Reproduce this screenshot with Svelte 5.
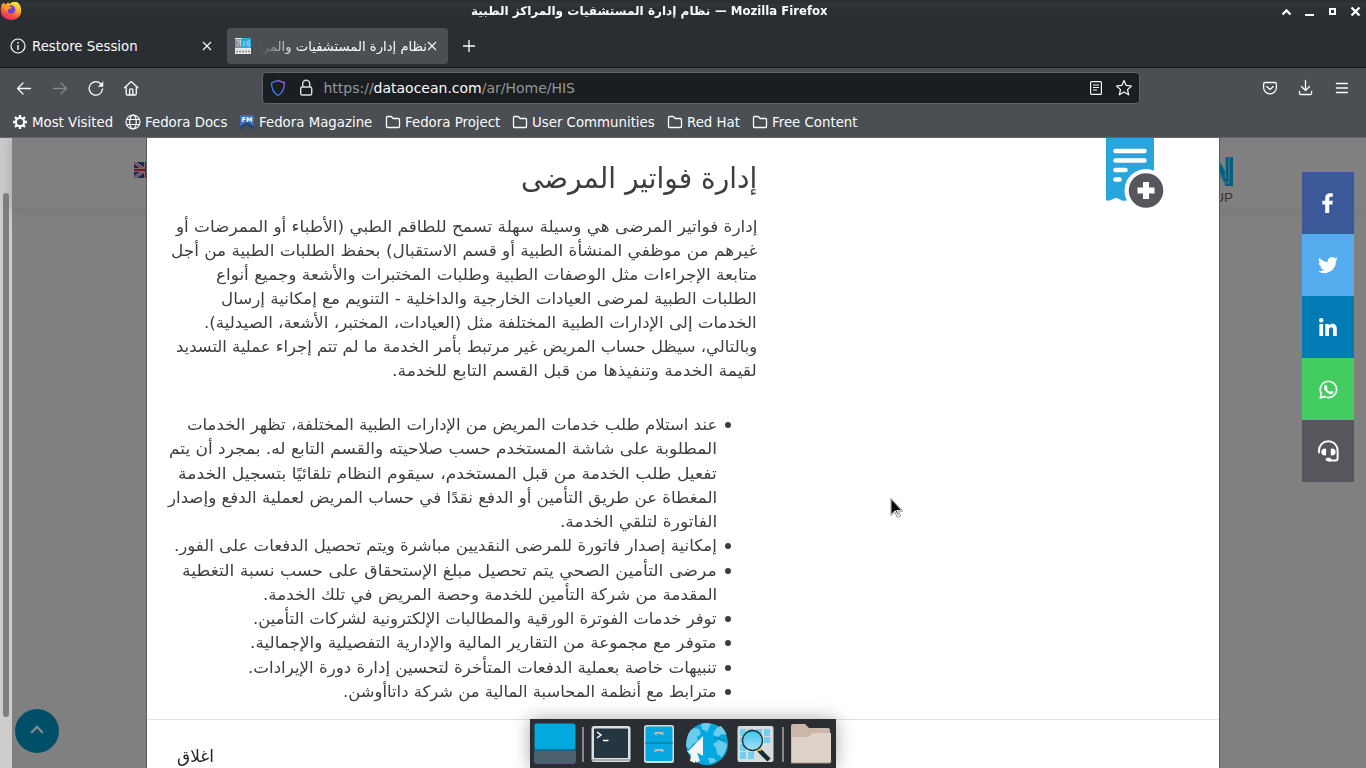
<script>
  const paragraph = [
    ['إدارة فواتير المرضى هي وسيلة سهلة تسمح للطاقم الطبي (الأطباء أو الممرضات أو', 581],
    ['غيرهم من موظفي المنشأة الطبية أو قسم الاستقبال) بحفظ الطلبات الطبية من أجل', 586],
    ['متابعة الإجراءات مثل الوصفات الطبية وطلبات المختبرات والأشعة وجميع أنواع', 541],
    ['الطلبات الطبية لمرضى العيادات الخارجية والداخلية - التنويم مع إمكانية إرسال', 536],
    ['الخدمات إلى الإدارات الطبية المختلفة مثل (العيادات، المختبر، الأشعة، الصيدلية).', 553],
    ['وبالتالي، سيظل حساب المريض غير مرتبط بأمر الخدمة ما لم تتم إجراء عملية التسديد', 581],
    ['لقيمة الخدمة وتنفيذها من قبل القسم التابع للخدمة.', 365]
  ];
  const items = [
    [
      ['عند استلام طلب خدمات المريض من الإدارات الطبية المختلفة، تظهر الخدمات', 530],
      ['المطلوبة على شاشة المستخدم حسب صلاحيته والقسم التابع له. بمجرد أن يتم', 548],
      ['تفعيل طلب الخدمة من قبل المستخدم، سيقوم النظام تلقائيًا بتسجيل الخدمة', 539],
      ['المغطاة عن طريق التأمين أو الدفع نقدًا في حساب المريض لعملية الدفع وإصدار', 549],
      ['الفاتورة لتلقي الخدمة.', 157]
    ],
    [['إمكانية إصدار فاتورة للمرضى النقديين مباشرة ويتم تحصيل الدفعات على الفور.', 543]],
    [
      ['مرضى التأمين الصحي يتم تحصيل مبلغ الإستحقاق على حسب نسبة التغطية', 535],
      ['المقدمة من شركة التأمين للخدمة وحصة المريض في تلك الخدمة.', 454]
    ],
    [['توفر خدمات الفوترة الورقية والمطالبات الإلكترونية لشركات التأمين.', 464]],
    [['متوفر مع مجموعة من التقارير المالية والإدارية التفصيلية والإجمالية.', 467]],
    [['تنبيهات خاصة بعملية الدفعات المتأخرة لتحسين إدارة دورة الإيرادات.', 469]],
    [['مترابط مع أنظمة المحاسبة المالية من شركة داتاأوشن.', 374]]
  ];
  const folders = [['Fedora Project', 127], ['User Communities', 155], ['Red Hat', 85], ['Free Content', 110]];

  // Narrows or widens a line of text to the given measure.
  function fit(node, width) {
    node.style.transform = `scaleX(${width / node.offsetWidth})`;
  }
</script>

<div class="screen">
  <header class="titlebar">
    <svg class="fox" width="22" height="22" viewBox="0 0 22 22">
      <defs>
        <linearGradient id="fire" x1=".8" y1="0" x2=".25" y2="1"><stop offset="0" stop-color="#fff14a" /><stop offset=".35" stop-color="#ffb02e" /><stop offset=".65" stop-color="#ff5a36" /><stop offset="1" stop-color="#e9187a" /></linearGradient>
      </defs>
      <path d="M2 5.500 3.500 3.500l2 2.500 2.500-2.500 2 1.500 2-2h5c3 2 4.300 5 4.200 8.500 0 5.500-4 9.500-10 9.500S.8 17 .8 11.500C.8 9 1 7 2 5.500z" fill="url(#fire)" />
      <circle cx="11" cy="10.500" r="4.300" fill="#7143d0" />
      <path d="M3 6c3-1.500 5-.5 7 1.500 2 0 2 1 1 2-3 0-4 1.500-3 3.500-3-1-5-4-5-7z" fill="#ff9a27" />
    </svg>
    <div class="wintitle"><span class="t1" dir="rtl" use:fit={239}>نظام إدارة المستشفيات والمراكز الطبية</span><span class="t2" use:fit={113}>— Mozilla Firefox</span></div>
    <svg class="winbtns" width="84" height="20" viewBox="0 0 84 20" fill="none" stroke="#fff">
      <path d="M4.500 12.500 8.500 8.500l4 4" stroke-width="2.300" /><path d="M27 13h9" stroke-width="2" /><rect x="52" y="7" width="5" height="5" stroke-width="2" /><path d="m73.500 5.500 8 8m0-8-8 8" stroke-width="2.300" />
    </svg>
  </header>

  <nav class="tabs">
    <div class="tab">
      <svg class="info" width="16" height="16" viewBox="0 0 16 16" fill="none" stroke="#fbfbfe" stroke-width="1.200"><circle cx="8" cy="8" r="7" /><path d="M8 7v5M8 4v1.500" stroke-width="1.400" /></svg>
      <span class="tabname">Restore Session</span>
      <svg class="x" width="10" height="10" viewBox="0 0 10 10" stroke="#fbfbfe" stroke-width="1.100"><path d="m1 1 8 8m0-8-8 8" /></svg>
    </div>
    <div class="tab active">
      <svg width="16" height="16" viewBox="0 0 16 16"><path fill="#e6e8e9" d="M0 0h16v16H0z" /><path fill="#8b9094" d="M0 1h7v9H0z" /><path fill="#28aee5" d="M7 0h9v10H7z" /><path d="M1.500 3 4 2v3L2 8M5.500 2v6M9 3v5M11.500 3q2 2 0 5M14 2v7" fill="none" stroke="#cde" stroke-width=".8" /><path d="M1 13.500h14" stroke="#999" stroke-width="2" stroke-dasharray="2 1" /></svg>
      <span class="artab" dir="rtl"><span use:fit={168}>نظام إدارة المستشفيات والمرا</span></span>
      <svg class="x" width="10" height="10" viewBox="0 0 10 10" stroke="#fbfbfe" stroke-width="1.100"><path d="m1 1 8 8m0-8-8 8" /></svg>
    </div>
    <svg class="plus" width="14" height="14" viewBox="0 0 14 14" stroke="#fbfbfe" stroke-width="1.300"><path d="M7 1v12M1 7h12" /></svg>
  </nav>

  <section class="toolbar">
    <svg class="navicons" width="140" height="20" viewBox="0 0 140 20" fill="none" stroke="#fbfbfe" stroke-width="1.300" stroke-linecap="round" stroke-linejoin="round">
      <path d="M17.500 10.500H4.500m5.500-5.500-5.500 5.500L10 16" /><g stroke="#85878a"><path d="M40.500 10.500h13m-5.500-5.500 5.500 5.500L48 16" /></g>
      <path d="M89.500 11a6.700 6.700 0 1 1-2.100-5.500l2 2" /><path d="M90 4v4.500h-4.500z" fill="#fbfbfe" stroke-width=".5" />
      <path d="m111.500 9.800 6.700-6.200 6.700 6.200M113.200 8.500v7.300c0 .8.300 1.200 1.200 1.200h7.700c.8 0 1.200-.4 1.200-1.200V8.500m-6.700 8v-4.500c0-.8.400-1.200 1-1.200h1.300c.7 0 1 .4 1 1.200v4.500" />
    </svg>
    <div class="url">
      <svg width="44" height="18" viewBox="0 0 44 18" fill="none">
        <defs><linearGradient id="sh" x1="1" y1="0" x2="0" y2="1"><stop stop-color="#a05cf0" /><stop offset=".6" stop-color="#3c68e8" /><stop offset="1" stop-color="#2a9dee" /></linearGradient></defs>
        <path d="m8 1.500 6.500 2.300C14.500 10 12.500 14 8 16.500 3.500 14 1.500 10 1.500 3.800z" stroke="url(#sh)" stroke-width="1.400" />
        <rect x="30.700" y="8" width="11" height="8" rx="1.500" stroke="#ddd" stroke-width="1.400" />
        <path d="M32.700 8V4.800a3.500 3.500 0 0 1 7 0V8" stroke="#ddd" stroke-width="1.400" />
      </svg>
      <span class="addr">https://<b>dataocean.com</b>/ar/Home/HIS</span>
      <svg class="urlend" width="44" height="18" viewBox="0 0 44 18" fill="none" stroke="#fbfbfe" stroke-width="1.200" stroke-linejoin="round">
        <rect x="1.600" y="2.600" width="10.800" height="12.800" rx="1" /><path d="M4 6h6M4 8.500h6M4 11h4" />
        <path d="m35 1.500 2.200 4.900 5.300.6-4 3.600 1.200 5.200-4.700-2.700-4.700 2.700 1.200-5.200-4-3.600 5.300-.6z" />
      </svg>
    </div>
    <svg class="right" width="92" height="20" viewBox="0 0 92 20" fill="none" stroke="#fbfbfe" stroke-width="1.300" stroke-linecap="round" stroke-linejoin="round">
      <path d="M3 4.500h10c1 0 1.400.5 1.400 1.400v3.600a6.400 6.400 0 0 1-12.800 0V5.900C1.600 5 2 4.500 3 4.500zm1.700 4L8 11.500l3.300-3" /><path d="M43.500 2.500V12m-4-3.500 4 4 4-4M37.500 13.500v1.700c0 .9.400 1.300 1.300 1.300h9.500c.8 0 1.300-.4 1.300-1.300v-1.700" /><path d="M74.500 5.500h11M74.500 10h11M74.500 14.500h11" />
    </svg>
  </section>

  <section class="bookmarks">
    <div class="bm" style:width="113px"><svg width="16" height="16" viewBox="0 0 16 16" fill="none" stroke="#fbfbfe"><circle cx="8" cy="8" r="4.200" stroke-width="2.200" /><path d="M8 1v2.500M8 12.500V15M1 8h2.500M12.500 8H15M3 3l2 2M11 11l2 2M13 3l-2 2M5 11l-2 2" stroke-width="2.300" /></svg><span>Most Visited</span></div>
    <div class="bm" style:width="114px"><svg width="16" height="16" viewBox="0 0 16 16" fill="none" stroke="#fbfbfe" stroke-width="1.200"><circle cx="8" cy="8" r="7" /><ellipse cx="8" cy="8" rx="3.300" ry="7" /><path d="M1.500 5.500h13M1.500 10.500h13" /></svg><span>Fedora Docs</span></div>
    <div class="bm" style:width="146px"><svg width="16" height="16" viewBox="0 0 16 16"><path fill="#3c6eb4" d="M1 1h14v14l-7-5-7 5z" /><path fill="#294172" d="M1 12.500 8 8l7 4.500V16l-7-5-7 5z" /><text x="8" y="7.500" text-anchor="middle" fill="#fff" font-size="6.500" font-weight="bold" font-family="DejaVu Sans">FM</text></svg><span>Fedora Magazine</span></div>
    {#each folders as [name, width]}
      <div class="bm" style:width={`${width}px`}><svg width="16" height="16" viewBox="0 0 16 16" fill="none" stroke="#fbfbfe" stroke-width="1.300" stroke-linejoin="round"><path d="M1.500 12.500v-9c0-.6.400-1 1-1h3.700l2 2h5.300c.6 0 1 .4 1 1v7c0 .7-.4 1-1 1h-11c-.6 0-1-.4-1-1z" /></svg><span>{name}</span></div>
    {/each}
  </section>

  <main>
    <div class="scroll"><div class="thumb"></div></div>
    <div class="page">
      <div class="sitebar">
        <svg class="flag" width="22" height="16" viewBox="0 0 22 16"><path fill="#1b2659" d="M0 0h22v16H0z" /><path d="m0 0 22 16M22 0 0 16" stroke="#858087" stroke-width="3" /><path d="m0 0 22 16M22 0 0 16" stroke="#7d1f2d" stroke-width="1" /><path d="M12 0v16M0 8h22" stroke="#8a8285" stroke-width="4" /><path d="M12 0v16M0 8h22" stroke="#741824" stroke-width="2.400" /></svg>
        <div class="brand">
          <svg width="26" height="29" viewBox="0 0 26 29" fill="none" stroke="#006080"><path d="M6 0 21 26" stroke-width="7" /><path d="M22 0v29" stroke-width="8" /><path d="M18.300 0v22M22 0v26h-4L7 5" stroke="#688088" stroke-width=".9" /></svg>
          <span>GROUP</span>
        </div>
      </div>
      <div class="totop"><svg width="14" height="9" viewBox="0 0 14 9" fill="none" stroke="#7f898c" stroke-width="2.300"><path d="m1 8 6-6 6 6" /></svg></div>
    </div>

    <article class="modal" dir="rtl">
      <div class="body">
        <div class="pic">
          <svg width="60" height="72" viewBox="0 0 60 72">
            <path fill="#2aa5dc" d="M1 0h48v32l-20 31q-3-.5-5-.5-2 0-4 0-3 1-5-1-4-3-8 0-3 2-6 .5z" />
            <circle cx="41" cy="52.500" r="21.500" fill="#fff" />
            <path d="M10.500 13h29M10.500 22.500h29M10.500 32h10M10.500 41.500h4" stroke="#fff" stroke-width="4.600" stroke-linecap="round" />
            <circle cx="41" cy="52.500" r="17.300" fill="#57565c" /><path d="M41 44v17M32.500 52.500h17" stroke="#fff" stroke-width="6" />
          </svg>
        </div>
        <div class="copy">
          <h2><span class="line" use:fit={236}>إدارة فواتير المرضى</span></h2>
          <p>
            {#each paragraph as [text, width]}<span class="row"><span class="line" use:fit={width}>{text}</span></span>{/each}
          </p>
          <ul>
            {#each items as lines}
              <li>{#each lines as [text, width]}<span class="row"><span class="line" use:fit={width}>{text}</span></span>{/each}</li>
            {/each}
          </ul>
        </div>
      </div>
      <footer><span class="line" use:fit={37}>اغلاق</span></footer>
    </article>

    <aside class="social">
      <div class="fb"><svg width="12" height="20" viewBox="0 0 12 20" fill="#fff"><path d="M3.200 20v-8.500H.4V7.800h2.800V5c0-3.200 2-4.700 4.800-4.700h2.800v3.500H9.200C7.700 3.800 7.200 4.400 7.200 5.600v2.200h3.700l-.6 3.700H7.200V20z" /></svg></div>
      <div class="tw"><svg width="20" height="20" viewBox="0 0 24 24" fill="#fff"><path d="M24 4.600a10 10 0 0 1-2.800.8 5 5 0 0 0 2.100-2.700 10 10 0 0 1-3.100 1.200 5 5 0 0 0-8.400 4.500A14 14 0 0 1 1.700 3.200a5 5 0 0 0 1.500 6.500 5 5 0 0 1-2.200-.6v.1a5 5 0 0 0 4 4.800 5 5 0 0 1-2.300.1 5 5 0 0 0 4.600 3.400A10 10 0 0 1 0 19.500 14 14 0 0 0 21.500 7z" /></svg></div>
      <div class="li"><svg width="18" height="18" viewBox="0 0 18 18" fill="#fff"><circle cx="2.200" cy="2.200" r="2.200" /><path d="M.4 6h3.700v12H.4zM6.300 6h3.500v1.700c1.900-3 8-2.700 8 3.100V18h-3.700v-6.300c0-3.600-4.100-3.200-4.100 0V18H6.300z" /></svg></div>
      <div class="wa"><svg width="19" height="19" viewBox="0 0 20 20" fill="none" stroke="#fff"><path d="m1.200 18.800 1.300-4.500a8.600 8.600 0 1 1 3.300 3.200z" stroke-width="1.700" stroke-linejoin="round" /><path fill="#fff" stroke="none" d="M6.800 5.300h1l1.100 2.500c.1.500-.8 1.200-.8 1.500.8 1.600 2 2.500 3.500 3.100.4-.1 1-1.300 1.500-1.200l2.300 1.200c.1 1.700-1.200 2.600-2.500 2.600-3-.2-6.900-3.500-7.700-6.700 0-1.300.6-2.400 1.600-3z" /></svg></div>
      <div class="hd"><svg width="21" height="22" viewBox="0 0 21 22" fill="none" stroke="#fff" stroke-width="1.900" stroke-linecap="round"><path d="M1 12.500V10.500a9.200 9.200 0 0 1 18.600 0v8q0 2-2 2h-7" /><path fill="#fff" stroke="none" d="M7.300 8.500q-4 0-4 3.500t4 3.500q.8 0 .8-1v-5q0-1-.8-1zm6.300 0q-.8 0-.8 1v5q0 1 .8 1 4 0 4-3.500t-4-3.500z" /><path d="M9.500 19.500h2" stroke-width="3.500" /></svg></div>
    </aside>
  </main>

  <svg class="cursor" width="14" height="22" viewBox="0 0 14 22"><path d="M1 .5v17l3.800-3.300 2.500 5.300 3.400-1.600-2.500-4.800h4.600z" fill="#fff" stroke="#777" stroke-width=".8" /><path d="M1.500 1.700v14l3.700-3.400 3 5 .3-.3-2.300-4.900h4.600z" fill="#080808" /></svg>

  <div class="dock">
    <svg width="306" height="49" viewBox="0 0 306 49">
      <defs><linearGradient id="glass" x1="0" y1="0" x2="0" y2="1"><stop stop-color="#3dc3ee" /><stop offset="1" stop-color="#a7e3f6" /></linearGradient></defs>
      <rect x="4.500" y="4.500" width="41" height="40" rx="2" fill="#02a9df" /><path d="M4.500 31.500h41v11q0 2-2 2h-37q-2 0-2-2z" fill="#4c606d" /><path d="M4 31h42" stroke="#203f50" />
      <path d="M53 8v35M253 8v35" stroke="#929292" stroke-width="1.800" />
      <rect x="61.500" y="7" width="39" height="36" rx="2.500" fill="#dcdfe0" /><path d="M62 41h38" stroke="#a7abae" stroke-width="2" /><rect x="64" y="9.500" width="34" height="29.500" rx="1" fill="#263640" /><path d="m67 13 4 3-4 3M73 21.500h5.500" fill="none" stroke="#fff" stroke-width="1.500" />
      <rect x="114" y="6" width="30" height="38" rx="2.500" fill="#d2dadd" /><rect x="115.500" y="7.500" width="27" height="34.500" rx="1.500" fill="#06a8df" /><path d="M115 24h28" stroke="#076c92" /><path d="M125.500 16v-2h7v2M125.500 33v-2h7v2" fill="none" stroke="#bdb8b4" stroke-width="1.800" />
      <circle cx="177" cy="25" r="21" fill="#02a8df" />
      <g fill="#6acbed"><path d="M157 20q1-8 7-11l5 1 2 5-4 3 1 4-5 3-4 5-3-3zM171 5q5-2 10 0l-4 8-5-3zM184 13q3-6 7-6 4 4 6 9l-5-1-4 3-5-2zM183 25l6-4 8 4q-1 8-5 13l-5-3-1-6zM178 39l6 0 2 3-6 3z" /></g>
      <path d="M184 20q3-3 6 0t5 0" fill="none" stroke="#087fa9" />
      <path d="m172 18 .5 19-5-3-1 0 4 8-4 2.500-4-8-5.500 5-1-1-.5-8z" fill="none" />
      <path d="M173 17 157.500 33l6-.3 -.5 2 3 9 4-2-3-8 6 3z" fill="#f4f5f6" />
      <path d="M157 32 167 31l-2 13-5-2 1-6z" fill="#f4f5f6" />
      <rect x="207.500" y="7" width="36" height="36" rx="2" fill="#d9dcde" /><g fill="#70d0ee"><path d="M210 10h6v7h-6zm8 0h6v7h-6zm8 0h6v7h-6zm8 0h6v7h-6zM210 18h6v6h-6zm24 0h6v6h-6zM210 25h6v7h-6zm0 8h6v7h-6zm8 0h6v7h-6z" /></g><path d="m229 31 10 10" stroke="#172b35" stroke-width="4.500" /><path d="m229 29.500 2 2" stroke="#f0c000" stroke-width="3" /><circle cx="222.500" cy="21.500" r="10" fill="url(#glass)" stroke="#20323b" stroke-width="1.300" />
      <path d="M261 44V7q0-2 2-2h12l4 4h19q2 0 2 2v31q0 2-2 2z" fill="#cbb6a8" /><path d="M262 18h16l5-4h18v28q0 2-2 2h-37z" fill="#ded3ca" /><path d="M261 44h39q1 0 1-2" fill="none" stroke="#a89688" />
    </svg>
  </div>
</div>

<style>
  :global(body) { margin: 0; overflow: hidden; }
  * { box-sizing: border-box; }
  svg { display: block; flex: none; }
  .screen { position: relative; width: 1366px; height: 768px; display: flex; flex-direction: column; font-family: "DejaVu Sans", sans-serif; font-size: 14px; color: #fbfbfe; background: #2a2d31; overflow: hidden; white-space: nowrap; }
  .titlebar { height: 24px; flex: none; display: flex; align-items: flex-start; background: linear-gradient(#2c3034 0 3px, #32353a 4px, #2a3033 9px, #2a2d31 24px); }
  .fox { margin-top: -1px; }
  .wintitle { display: grid; grid-template-columns: 239px 113px; gap: 5px; margin-left: 449px; font-weight: bold; font-size: 12px; line-height: 22px; }
  .t1 { transform-origin: right; width: max-content; justify-self: end; }
  .t2 { transform-origin: left; width: max-content; }
  .winbtns { margin: 2px 4px 0 auto; }
  .tabs { height: 44px; flex: none; display: flex; align-items: center; padding: 0 0 0 3px; border-bottom: 1px solid #181b1d; }
  .tab { width: 220px; height: 36px; display: flex; align-items: center; padding: 0 11px 0 7px; margin-right: 4px; border-radius: 4px; }
  .tab.active { background: #4b4e52; padding-left: 8px; width: 221px; }
  .info { margin-top: 1px; }
  .tabname { margin: 2px 0 0 6px; font-size: 13.330px; }
  .x { margin-left: auto; }
  .artab { width: 168px; margin: 1px 0 0 8px; font-size: 13.330px; mask-image: linear-gradient(to right, transparent, #000 38px); }
  .artab > span { display: inline-block; transform-origin: right; }
  .tab.active .x { margin-left: 0; }
  .plus { margin: 1px 0 0 10px; }
  .toolbar { height: 40px; flex: none; display: flex; align-items: center; background: #4b4e52; padding: 0 12px 0 13px; }
  .url { display: flex; align-items: center; width: 878px; height: 32px; margin: 0 0 0 109px; border: 1px solid #606469; border-radius: 4px; background: #1b1e20; padding: 0 6px 0 7px; }
  .addr { margin-left: 9.500px; font-size: 14px; color: #94969a; letter-spacing: -.01px; }
  .addr b { font-weight: normal; color: #fbfbfe; }
  .urlend { margin-left: auto; }
  .right { margin-left: auto; }
  .bookmarks { height: 30px; flex: none; display: flex; align-items: center; padding: 0 0 1px 12px; background: #4b4e52; border-bottom: 1px solid #666769; font-size: 13.330px; }
  .bm { display: flex; align-items: center; gap: 4px; }
  main { flex: 1; display: flex; position: relative; background: #808080; overflow: hidden; }
  .scroll { width: 12px; background: #cdcdcd; padding: 55px 3px 0; }
  .thumb { height: 524px; border-radius: 3px; background: #7c8080; }
  .page { flex: 1; display: flex; flex-direction: column; justify-content: space-between; padding-bottom: 15px; background: #808080; }
  .sitebar { height: 70px; display: flex; justify-content: space-between; padding: 24px 133px 0 122px; box-shadow: 0 2px 12px #70707580; }
  .flag { border-radius: 2px; }
  .brand { display: flex; flex-direction: column; align-items: flex-end; margin-top: -5px; color: #333; font-size: 13.500px; font-family: "Liberation Sans", sans-serif; line-height: 24px; }
  .totop { width: 44px; height: 44px; margin-left: 3px; border-radius: 50%; display: grid; place-items: center; padding-bottom: 4px; background: #004f69; }
  .modal { position: absolute; left: 146px; top: 0; width: 1074px; height: 640px; background: #fff; border: solid #5c5c5c; border-width: 0 1px; color: #3e3e40; }
  .body { height: 582px; display: flex; justify-content: space-between; border-bottom: 1px solid #dee2e6; }
  .pic { padding-right: 54px; }
  .copy { width: 610px; font-family: "DejaVu Sans Condensed", "DejaVu Sans", sans-serif; font-stretch: condensed; font-size: 16px; }
  .line { display: inline-block; transform-origin: right; }
  h2 { margin: 20px 0 13px; height: 44px; line-height: 40px; font-size: 29px; font-weight: normal; }
  p { margin: 0; height: 198px; }
  .row { display: block; height: 24px; line-height: 24px; }
  ul { margin: 0; padding: 0 40px 0 0; list-style: none; }
  li { position: relative; }
  li::before { content: ""; position: absolute; right: -14px; top: 9px; width: 6px; height: 6px; border-radius: 50%; background: #3e3e40; }
  li .row { height: 24.250px; }
  footer { padding: 24px 0 0; text-align: left; color: #212529; font-size: 16.500px; line-height: 26px; }
  footer .line { transform-origin: left; margin-left: 30px; }
  .social { position: absolute; left: 1302px; top: 34px; width: 52px; }
  .social div { height: 62px; display: grid; place-items: center; }
  .fb { background: #3b5998; } .tw { background: #55acee; } .li { background: #007bb5; } .wa { background: #43cd60; } .hd { background: #57565c; }
  .cursor { position: absolute; left: 890px; top: 498px; }
  .dock { position: absolute; left: 530px; top: 719px; width: 306px; height: 49px; background: #2a2d32; box-shadow: 0 0 18px #0005; }
</style>
